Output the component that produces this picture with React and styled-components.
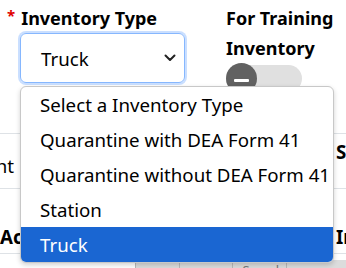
import React from "react";
import styled, { createGlobalStyle } from "styled-components";

const GlobalStyle = createGlobalStyle`
  html, body { margin: 0; padding: 0; background: #fff; }
  body { font-family: "Noto Sans", "Open Sans", sans-serif; color: #212529; }
`;

const Page = styled.div`
  position: relative;
  width: 346px;
  height: 268px;
  overflow: hidden;
  background: #fff;
`;

const FormRow = styled.div`
  display: flex;
  padding: 3px 0 0 7px;
  height: 91px;
`;

const FieldGroup = styled.div`
  width: 219px;
  display: flex;
  flex-direction: column;
`;

const Label = styled.div`
  display: flex;
  align-items: flex-start;
  font-size: 18px;
  font-weight: 700;
  line-height: 30px;
  color: #000;
  white-space: nowrap;
`;

const Required = styled.span`
  color: #e00000;
  font-size: 15px;
  line-height: 24px;
  margin-right: 6px;
`;

const SelectBox = styled.div`
  margin-left: 13px;
  width: 165px;
  height: 50px;
  box-sizing: border-box;
  border: 1px solid #86b7fe;
  border-radius: 6px;
  box-shadow: 0 0 0 2px rgba(13, 110, 253, 0.22);
  display: flex;
  align-items: center;
  justify-content: space-between;
  padding: 0 8px 0 20px;
  font-size: 18.7px;
  color: #000;
`;

const ToggleGroup = styled.div`
  width: 118px;
  display: flex;
  flex-direction: column;
`;

const ToggleLabel = styled.div`
  font-size: 18px;
  font-weight: 700;
  line-height: 30px;
  color: #000;
`;

const Switch = styled.div`
  position: relative;
  width: 76px;
  height: 31px;
  display: flex;
  align-items: center;
`;

const Track = styled.div`
  width: 76px;
  height: 27px;
  border-radius: 14px;
  background: #e0e0e0;
`;

const Knob = styled.div`
  position: absolute;
  left: 0;
  top: 0;
  width: 31px;
  height: 31px;
  border-radius: 50%;
  background: #616161;
  display: flex;
  align-items: center;
  justify-content: center;
  &::after {
    content: "";
    width: 15px;
    height: 3px;
    margin-top: 3px;
    background: #fff;
    border-radius: 1px;
  }
`;

const Table = styled.div`
  display: flex;
  flex-direction: column;
`;

const Row = styled.div`
  display: grid;
  grid-template-columns: 22px 1fr 14px;
  height: ${(p) => p.$h}px;
  border-bottom: 1px solid #dee2e6;
`;

const Cell = styled.div`
  display: flex;
  overflow: hidden;
  white-space: nowrap;
  justify-content: ${(p) => (p.$end ? "flex-end" : "flex-start")};
  align-items: ${(p) => p.$align || "center"};
  padding: ${(p) => p.$pad || "0"};
  font-size: 18.7px;
  font-weight: ${(p) => (p.$bold ? 700 : 400)};
  color: #000;
`;

const FilterRow = styled.div`
  display: flex;
  height: 20px;
  margin-top: 6px;
  padding-left: 135px;
`;

const FilterBox = styled.div`
  width: ${(p) => p.$w}px;
  box-sizing: border-box;
  border-left: 1px solid #b8b8b8;
  background: #dcdcdc;
  font-size: 13px;
  color: #777;
  padding: 2px 0 0 10px;
  line-height: 16px;
`;

const Dropdown = styled.div`
  position: absolute;
  left: 20px;
  top: 86px;
  width: 314px;
  box-sizing: border-box;
  border: 1px solid #c8c8c8;
  border-radius: 6px;
  background: #fff;
  box-shadow: 0 2px 5px rgba(0, 0, 0, 0.18);
  overflow: hidden;
`;

const Option = styled.div`
  height: 35px;
  display: flex;
  align-items: center;
  padding-left: 19px;
  font-size: 18.7px;
  white-space: nowrap;
  color: ${(p) => (p.$active ? "#fff" : "#000")};
  background: ${(p) => (p.$active ? "#1a66d2" : "transparent")};
`;

const Chevron = () => (
  <svg width="12" height="8" viewBox="0 0 12 8">
    <path d="M1.5 1.5 L6 6 L10.5 1.5" fill="none" stroke="#222" strokeWidth="2" strokeLinecap="round" strokeLinejoin="round" />
  </svg>
);

const options = [
  "Select a Inventory Type",
  "Quarantine with DEA Form 41",
  "Quarantine without DEA Form 41",
  "Station",
  "Truck",
];

export default function App() {
  return (
    <>
      <GlobalStyle />
      <Page>
        <FormRow>
          <FieldGroup>
            <Label>
              <Required>*</Required>
              Inventory Type
            </Label>
            <SelectBox>
              <span>Truck</span>
              <Chevron />
            </SelectBox>
          </FieldGroup>
          <ToggleGroup>
            <ToggleLabel>For Training Inventory</ToggleLabel>
            <Switch>
              <Track />
              <Knob />
            </Switch>
          </ToggleGroup>
        </FormRow>
        <Table>
          <Row $h={39} />
          <Row $h={54}>
            <Cell $end $pad="9px 8px 0 0">Amount</Cell>
            <Cell />
            <Cell $bold $align="flex-start" $pad="5px 0 0 4px">Serial</Cell>
          </Row>
          <Row $h={64}>
            <Cell $bold $align="flex-end" $pad="0 0 4px 0">Action</Cell>
            <Cell />
            <Cell $bold $align="flex-end" $pad="0 0 4px 4px">Inventory</Cell>
          </Row>
          <FilterRow>
            <FilterBox $w={44}>»</FilterBox>
            <FilterBox $w={53} />
            <FilterBox $w={55}>Search</FilterBox>
            <FilterBox $w={60} />
          </FilterRow>
        </Table>
        <Dropdown>
          {options.map((o) => (
            <Option key={o} $active={o === "Truck"}>{o}</Option>
          ))}
        </Dropdown>
      </Page>
    </>
  );
}
